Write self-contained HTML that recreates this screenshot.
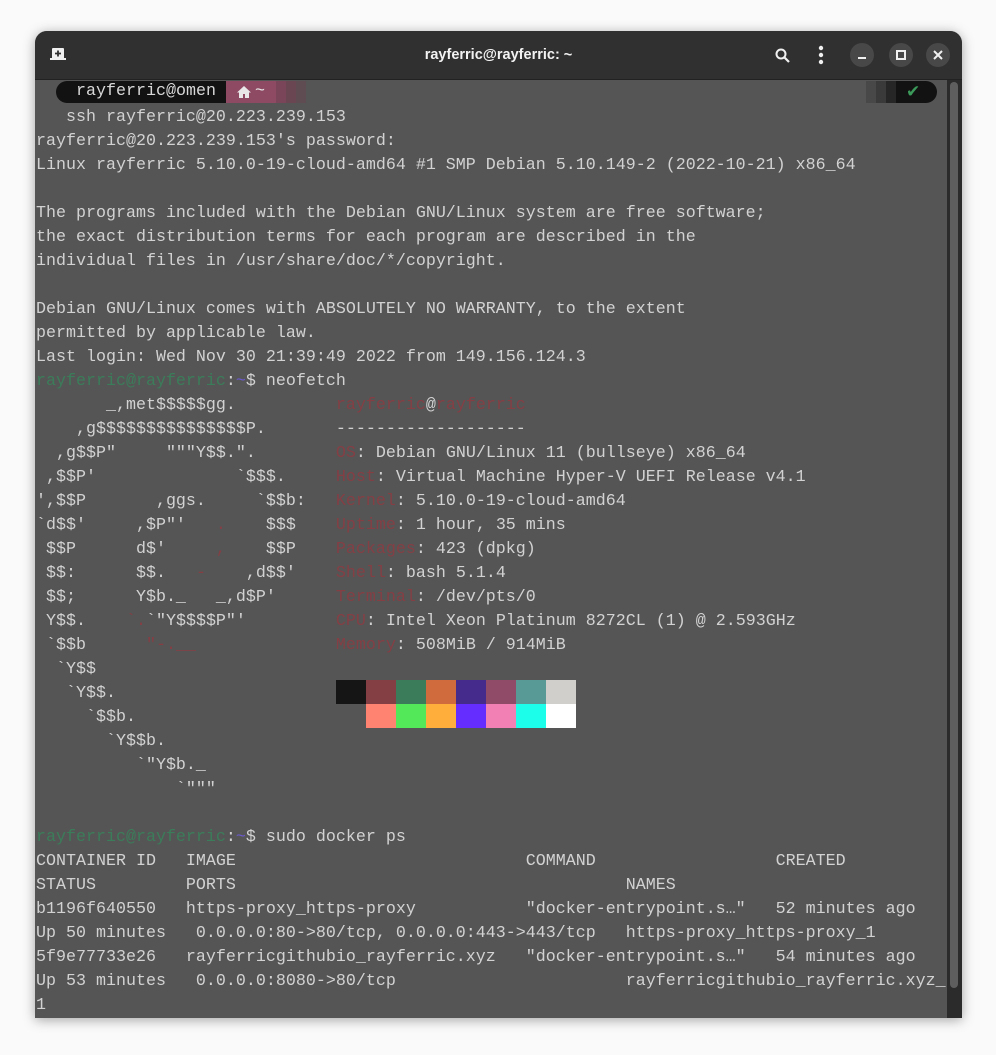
<!DOCTYPE html>
<html><head><meta charset="utf-8"><style>
html,body{margin:0;padding:0;width:996px;height:1055px;background:#fafafa;overflow:hidden}
.win{position:absolute;left:35px;top:31px;width:927px;height:987px;background:#555555;border-radius:12px 12px 0 0;overflow:hidden;box-shadow:0 2px 12px rgba(0,0,0,.35)}
.tb{position:absolute;left:0;top:0;width:927px;height:48px;background:#303030;border-bottom:1px solid #222}
.title{position:absolute;left:0;width:927px;top:16px;text-align:center;color:#f2f2f2;font:bold 14.5px "Liberation Sans",sans-serif}
.btn{position:absolute;top:12px;width:24px;height:24px;border-radius:50%;background:#484848}
.t{position:absolute;left:1px;font-family:"Liberation Mono",monospace;font-size:16.667px;line-height:24px;color:#d2d2d2;white-space:pre;margin:0}
.r{color:#843f45}.g{color:#3b7d5a}.b{color:#6a5acd}
.sw{position:absolute;width:30px;height:24px}
</style></head><body>
<div class="win">
<div class="tb">
 <svg style="position:absolute;left:15px;top:16px" width="16" height="14" viewBox="0 0 16 14"><path d="M3 1h10a1 1 0 0 1 1 1v9h2v2H0v-2h2V2a1 1 0 0 1 1-1z" fill="#f0f0f0"/><path d="M8 3.5v6M5 6.5h6" stroke="#303030" stroke-width="1.8"/></svg>
 <div class="title">rayferric@rayferric: ~</div>
 <svg style="position:absolute;left:740px;top:17px" width="15" height="15" viewBox="0 0 15 15"><circle cx="6" cy="6" r="4.5" stroke="#f0f0f0" stroke-width="2" fill="none"/><path d="M9.5 9.5L14 14" stroke="#f0f0f0" stroke-width="2.2"/></svg>
 <svg style="position:absolute;left:783px;top:14px" width="6" height="20"><circle cx="3" cy="3" r="2.2" fill="#f0f0f0"/><circle cx="3" cy="10" r="2.2" fill="#f0f0f0"/><circle cx="3" cy="17" r="2.2" fill="#f0f0f0"/></svg>
 <div class="btn" style="left:815px"><div style="position:absolute;left:8px;top:14px;width:8px;height:2px;background:#f0f0f0"></div></div>
 <div class="btn" style="left:854px"><div style="position:absolute;left:7px;top:7px;width:6px;height:6px;border:2px solid #f0f0f0"></div></div>
 <div class="btn" style="left:891px"><svg style="position:absolute;left:7px;top:7px" width="10" height="10"><path d="M1 1L9 9M9 1L1 9" stroke="#f0f0f0" stroke-width="2"/></svg></div>
</div>
<!-- prompt bar -->
<div style="position:absolute;left:21px;top:50px;width:172px;height:22px;background:#121212;border-radius:11px 0 0 11px"></div>
<div class="t" style="left:41px;top:49px;color:#d8d8d8">rayferric@omen</div>
<div style="position:absolute;left:191px;top:50px;width:50px;height:22px;background:#8e4a63"></div>
<div style="position:absolute;left:241px;top:50px;width:10px;height:22px;background:#7a4558"></div>
<div style="position:absolute;left:251px;top:50px;width:10px;height:22px;background:#6a4552"></div>
<div style="position:absolute;left:261px;top:50px;width:10px;height:22px;background:#5f4c53"></div>
<svg style="position:absolute;left:201px;top:54px" width="16" height="14" viewBox="0 0 16 14"><path d="M8 1L1 7.5h2V13h4V9h2v4h4V7.5h2z" fill="#e8e8e8"/></svg>
<div class="t" style="left:220px;top:49px;color:#e8e8e8">~</div>
<div style="position:absolute;left:831px;top:50px;width:10px;height:22px;background:#484848"></div>
<div style="position:absolute;left:841px;top:50px;width:10px;height:22px;background:#3a3a3a"></div>
<div style="position:absolute;left:851px;top:50px;width:10px;height:22px;background:#262626"></div>
<div style="position:absolute;left:861px;top:50px;width:41px;height:22px;background:#121212;border-radius:0 11px 11px 0"></div>
<div style="position:absolute;left:871px;top:49px;color:#3b9a5a;font:bold 17px 'DejaVu Sans',sans-serif;line-height:24px">✔</div>
<!-- scrollbar -->
<div style="position:absolute;left:912px;top:49px;width:15px;height:938px;background:#2b2b2b"></div>
<div style="position:absolute;left:915px;top:51px;width:8px;height:906px;background:#5e5e5e;border-radius:4px"></div>
<pre class="t" style="top:75px">   ssh rayferric@20.223.239.153
rayferric@20.223.239.153's password:
Linux rayferric 5.10.0-19-cloud-amd64 #1 SMP Debian 5.10.149-2 (2022-10-21) x86_64

The programs included with the Debian GNU/Linux system are free software;
the exact distribution terms for each program are described in the
individual files in /usr/share/doc/*/copyright.

Debian GNU/Linux comes with ABSOLUTELY NO WARRANTY, to the extent
permitted by applicable law.
Last login: Wed Nov 30 21:39:49 2022 from 149.156.124.3
<span class="g">rayferric@rayferric</span>:<span class="b">~</span>$ neofetch
       _,met$$$$$gg.          <span class="r">rayferric</span>@<span class="r">rayferric</span>
    ,g$$$$$$$$$$$$$$$P.       -------------------
  ,g$$P"     """Y$$.".        <span class="r">OS</span>: Debian GNU/Linux 11 (bullseye) x86_64
 ,$$P'              `$$$.     <span class="r">Host</span>: Virtual Machine Hyper-V UEFI Release v4.1
',$$P       ,ggs.     `$$b:   <span class="r">Kernel</span>: 5.10.0-19-cloud-amd64
`d$$'     ,$P"'   <span class="r">.</span>    $$$    <span class="r">Uptime</span>: 1 hour, 35 mins
 $$P      d$'     <span class="r">,</span>    $$P    <span class="r">Packages</span>: 423 (dpkg)
 $$:      $$.   <span class="r">-</span>    ,d$$'    <span class="r">Shell</span>: bash 5.1.4
 $$;      Y$b._   _,d$P'      <span class="r">Terminal</span>: /dev/pts/0
 Y$$.    <span class="r">`.</span>`"Y$$$$P"'         <span class="r">CPU</span>: Intel Xeon Platinum 8272CL (1) @ 2.593GHz
 `$$b      <span class="r">"-.__</span>              <span class="r">Memory</span>: 508MiB / 914MiB
  `Y$$
   `Y$$.
     `$$b.
       `Y$$b.
          `"Y$b._
              `"""

<span class="g">rayferric@rayferric</span>:<span class="b">~</span>$ sudo docker ps
CONTAINER ID   IMAGE                             COMMAND                  CREATED
STATUS         PORTS                                       NAMES
b1196f640550   https-proxy_https-proxy           "docker-entrypoint.s…"   52 minutes ago
Up 50 minutes   0.0.0.0:80->80/tcp, 0.0.0.0:443->443/tcp   https-proxy_https-proxy_1
5f9e77733e26   rayferricgithubio_rayferric.xyz   "docker-entrypoint.s…"   54 minutes ago
Up 53 minutes   0.0.0.0:8080->80/tcp                       rayferricgithubio_rayferric.xyz_
1</pre>
<!-- color swatches -->
<div class="sw" style="left:301px;top:649px;background:#151515"></div>
<div class="sw" style="left:331px;top:649px;background:#843f45"></div>
<div class="sw" style="left:361px;top:649px;background:#3b7d5a"></div>
<div class="sw" style="left:391px;top:649px;background:#d06b3d"></div>
<div class="sw" style="left:421px;top:649px;background:#452b8c"></div>
<div class="sw" style="left:451px;top:649px;background:#904b68"></div>
<div class="sw" style="left:481px;top:649px;background:#589a95"></div>
<div class="sw" style="left:511px;top:649px;background:#d0cfcb"></div>
<div class="sw" style="left:331px;top:673px;background:#ff8370"></div>
<div class="sw" style="left:361px;top:673px;background:#52e85a"></div>
<div class="sw" style="left:391px;top:673px;background:#ffae3b"></div>
<div class="sw" style="left:421px;top:673px;background:#652dff"></div>
<div class="sw" style="left:451px;top:673px;background:#f380b4"></div>
<div class="sw" style="left:481px;top:673px;background:#1cfeea"></div>
<div class="sw" style="left:511px;top:673px;background:#ffffff"></div>
</div>
</body></html>
